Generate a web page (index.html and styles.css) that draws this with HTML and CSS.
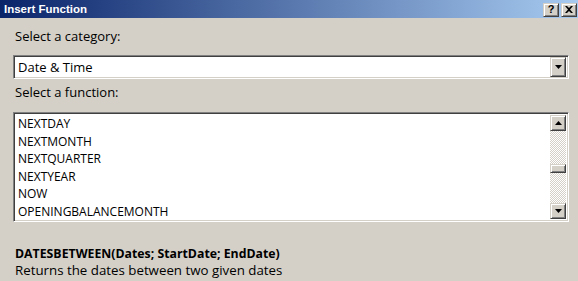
FILE: index.html
```html
<!DOCTYPE html>
<html>
<head>
<meta charset="utf-8">
<link rel="stylesheet" href="styles.css">
</head>
<body>
<div class="dialog">
  <div class="titlebar">
    <span class="title">Insert Function</span>
    <div class="tbuttons">
      <span class="tbtn">?</span>
      <span class="tbtn x">
        <svg width="8" height="7" viewBox="0 0 8 7"><path d="M0 0h2l2 2 2-2h2L5 3.5 8 7H6L4 5 2 7H0l3-3.5z" fill="#000"/></svg>
      </span>
    </div>
  </div>
  <div class="content">
    <div class="label l1">Select a category:</div>
    <div class="combo">
      <span class="combo-text">Date &amp; Time</span>
      <span class="sbtn"><svg width="7" height="4" viewBox="0 0 7 4"><path d="M0 0h7L3.5 4z" fill="#000"/></svg></span>
    </div>
    <div class="label l2">Select a function:</div>
    <div class="list">
      <div class="items">
        <div class="item">NEXTDAY</div>
        <div class="item">NEXTMONTH</div>
        <div class="item">NEXTQUARTER</div>
        <div class="item">NEXTYEAR</div>
        <div class="item">NOW</div>
        <div class="item">OPENINGBALANCEMONTH</div>
      </div>
      <div class="scrollbar">
        <span class="sbtn"><svg width="7" height="4" viewBox="0 0 7 4"><path d="M0 4h7L3.5 0z" fill="#000"/></svg></span>
        <div class="track t1"></div>
        <span class="thumb"></span>
        <div class="track t2"></div>
        <span class="sbtn"><svg width="7" height="4" viewBox="0 0 7 4"><path d="M0 0h7L3.5 4z" fill="#000"/></svg></span>
      </div>
    </div>
    <div class="desc">
      <div class="sig">DATESBETWEEN(Dates; StartDate; EndDate)</div>
      <div class="summary">Returns the dates between two given dates</div>
    </div>
  </div>
</div>
</body>
</html>
```

FILE: styles.css
```css
* { box-sizing: border-box; }
html, body { margin: 0; padding: 0; }
body {
  width: 578px;
  height: 281px;
  overflow: hidden;
  background: #d4d0c8;
  font-family: "Open Sans", "Noto Sans", sans-serif;
  font-size: 13px;
  color: #000;
}
.dialog { width: 578px; height: 281px; }
.titlebar {
  height: 18px;
  background: linear-gradient(to right, #0a246a, #a6caf0);
  display: flex;
  align-items: center;
  justify-content: space-between;
  padding: 0 1px 0 4px;
}
.title {
  color: #fff;
  font-family: "Liberation Sans", Arial, sans-serif;
  font-weight: bold;
  font-size: 11.5px;
}
.tbuttons { display: flex; gap: 2px; padding-top: 1px; }
.tbtn {
  width: 16px;
  height: 14px;
  background: #d4d0c8;
  border: 1px solid;
  border-color: #d4d0c8 #404040 #404040 #d4d0c8;
  box-shadow: inset 1px 1px #fff, inset -1px -1px #808080;
  display: flex;
  align-items: center;
  justify-content: center;
  font-family: "Liberation Sans", Arial, sans-serif;
  font-weight: bold;
  font-size: 11px;
  line-height: 1;
}
.content { padding: 0 9px 0 13px; }
.label { height: 17px; line-height: 17px; padding-left: 2px; }
.l1 { margin-top: 10px; }
.combo {
  margin-top: 10px;
  height: 24px;
  background: #fff;
  border: 1px solid;
  border-color: #808080 #fff #fff #808080;
  box-shadow: inset 1px 1px #404040, inset -1px -1px #d4d0c8;
  display: flex;
  align-items: center;
  justify-content: space-between;
  padding: 2px;
}
.combo-text { padding-left: 2px; line-height: 18px; }
.sbtn {
  width: 16px;
  height: 16px;
  background: #d4d0c8;
  border: 1px solid;
  border-color: #d4d0c8 #404040 #404040 #d4d0c8;
  box-shadow: inset 1px 1px #fff, inset -1px -1px #808080;
  display: flex;
  align-items: center;
  justify-content: center;
  flex: none;
}
.combo .sbtn { height: 20px; }
.l2 { margin-top: 5px; }
.list {
  margin-top: 11px;
  height: 110px;
  background: #fff;
  border: 1px solid;
  border-color: #808080 #fff #fff #808080;
  box-shadow: inset 1px 1px #404040, inset -1px -1px #d4d0c8;
  display: flex;
  padding: 2px;
}
.items { flex: 1; padding-left: 2px; padding-top: 0; font-size: 12px; }
.item { height: 17.6px; line-height: 17.6px; }
.scrollbar {
  width: 16px;
  display: flex;
  flex-direction: column;
}
.track {
  background: repeating-conic-gradient(#fff 0 25%, #d4d0c8 0 50%) 0 0 / 2px 2px;
}
.t1 { height: 33px; }
.t2 { flex: 1; }
.thumb {
  height: 9px;
  background: #d4d0c8;
  border: 1px solid;
  border-color: #d4d0c8 #404040 #404040 #d4d0c8;
  box-shadow: inset 1px 1px #fff, inset -1px -1px #808080;
}
.desc { margin-top: 23px; padding-left: 2px; }
.sig { font-weight: bold; font-size: 12.3px; height: 17px; line-height: 17px; }
.summary { font-size: 13.3px; height: 17px; line-height: 17px; }
```
